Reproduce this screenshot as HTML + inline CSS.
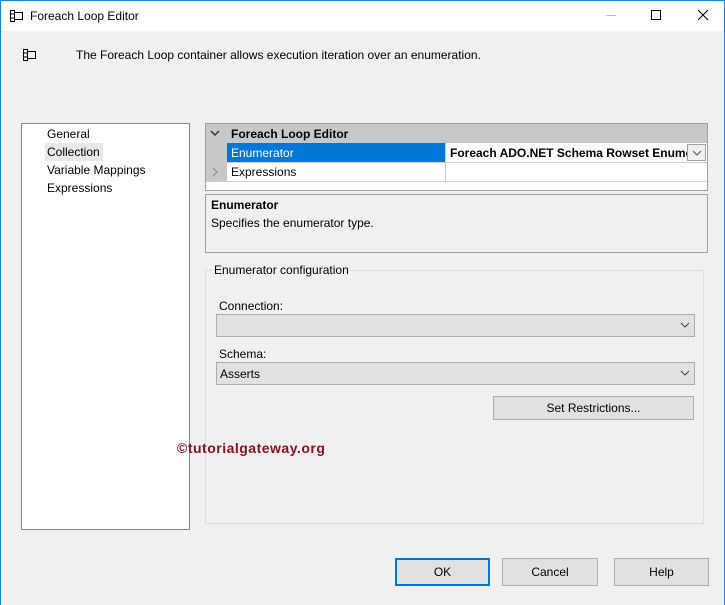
<!DOCTYPE html>
<html><head><style>
*{margin:0;padding:0;box-sizing:border-box}
body{width:725px;height:605px;overflow:hidden;background:#f0f0f0;font-family:"Liberation Sans",sans-serif;font-size:12px;color:#000;position:relative}
.a{position:absolute}
.t{position:absolute;white-space:nowrap;line-height:14px}
</style></head><body>
<div class="a" style="left:0;top:0;width:725px;height:31px;background:#fff"></div>
<div class="a" style="left:0;top:0;width:725px;height:1px;background:#1883d7"></div>
<div class="a" style="left:0;top:0;width:1px;height:605px;background:#1883d7"></div>
<div class="a" style="left:724px;top:0;width:1px;height:605px;background:#1883d7"></div>
<svg class="a" style="left:9px;top:9px" width="16" height="14"><path d="M1.5 1.5h4v11h-4zM1.5 5h4M1.5 9h4M5.5 3.5h8v7h-8" fill="none" stroke="#000" stroke-width="1"/></svg>
<div class="t" style="left:30px;top:9px">Foreach Loop Editor</div>
<div class="a" style="left:606px;top:15px;width:10px;height:1px;background:#bbb"></div>
<div class="a" style="left:651px;top:10px;width:10px;height:10px;border:1px solid #000"></div>
<svg class="a" style="left:697px;top:9px" width="12" height="12"><path d="M1 1L11 11M11 1L1 11" stroke="#000" stroke-width="1"/></svg>
<svg class="a" style="left:22px;top:48px" width="16" height="14"><path d="M1.5 1.5h4v11h-4zM1.5 5h4M1.5 9h4M5.5 3.5h8v7h-8" fill="none" stroke="#000" stroke-width="1"/></svg>
<div class="t" style="left:76px;top:48px">The Foreach Loop container allows execution iteration over an enumeration.</div>

<div class="a" style="left:21px;top:123px;width:169px;height:407px;background:#fff;border:1px solid #828790"></div>
<div class="t" style="left:47px;top:127px">General</div>
<div class="a" style="left:45px;top:143px;width:58px;height:18px;background:#e8e8e8"></div>
<div class="t" style="left:47px;top:145px">Collection</div>
<div class="t" style="left:47px;top:163px">Variable Mappings</div>
<div class="t" style="left:47px;top:181px">Expressions</div>

<div class="a" style="left:205px;top:123px;width:503px;height:68px;background:#fff;border:1px solid #a0a0a0"></div>
<div class="a" style="left:206px;top:124px;width:501px;height:19px;background:#c8c8c8"></div>
<div class="a" style="left:206px;top:143px;width:21px;height:38px;background:#c8c8c8"></div>
<svg class="a" style="left:210px;top:129px" width="10" height="8"><path d="M1 2l4 4 4-4" fill="none" stroke="#333" stroke-width="1.5"/></svg>
<div class="t" style="left:231px;top:127px;font-weight:bold">Foreach Loop Editor</div>
<div class="a" style="left:227px;top:143px;width:218px;height:19px;background:#0078d7"></div>
<div class="t" style="left:231px;top:146px;color:#fff">Enumerator</div>
<div class="a" style="left:445px;top:143px;width:1px;height:38px;background:#c8c8c8"></div>
<div class="t" style="left:450px;top:146px;font-weight:bold;width:237px;overflow:hidden">Foreach ADO.NET Schema Rowset Enumerator</div>
<div class="a" style="left:687px;top:144px;width:19px;height:17px;background:#f0f0f0;border:1px solid #a0a0a0"></div>
<svg class="a" style="left:692px;top:150px" width="10" height="6"><path d="M1 1l4 4 4-4" fill="none" stroke="#555"/></svg>
<div class="a" style="left:227px;top:162px;width:480px;height:1px;background:#d0d0d0"></div>
<svg class="a" style="left:212px;top:167px" width="6" height="10"><path d="M1 1l4 4-4 4" fill="none" stroke="#999" stroke-width="1.5"/></svg>
<div class="t" style="left:231px;top:165px">Expressions</div>
<div class="a" style="left:206px;top:181px;width:501px;height:1px;background:#d0d0d0"></div>

<div class="a" style="left:205px;top:194px;width:503px;height:59px;border:1px solid #a0a0a0"></div>
<div class="t" style="left:211px;top:198px;font-weight:bold">Enumerator</div>
<div class="t" style="left:211px;top:216px">Specifies the enumerator type.</div>

<div class="a" style="left:205px;top:270px;width:499px;height:254px;border:1px solid #dcdcdc"></div>
<div class="t" style="left:212px;top:263px;background:#f0f0f0;padding:0 2px">Enumerator configuration</div>
<div class="t" style="left:219px;top:299px">Connection:</div>
<div class="a" style="left:216px;top:314px;width:479px;height:23px;background:#e1e1e1;border:1px solid #adadad"></div>
<svg class="a" style="left:680px;top:322px" width="10" height="6"><path d="M1 1l4 4 4-4" fill="none" stroke="#444"/></svg>
<div class="t" style="left:219px;top:347px">Schema:</div>
<div class="a" style="left:216px;top:362px;width:479px;height:23px;background:#e1e1e1;border:1px solid #adadad"></div>
<div class="t" style="left:220px;top:367px">Asserts</div>
<svg class="a" style="left:680px;top:370px" width="10" height="6"><path d="M1 1l4 4 4-4" fill="none" stroke="#444"/></svg>
<div class="a" style="left:493px;top:396px;width:201px;height:24px;background:#e1e1e1;border:1px solid #adadad"></div>
<div class="t" style="left:493px;top:401px;width:201px;text-align:center">Set Restrictions...</div>

<div class="t" style="left:177px;top:441px;font-weight:bold;font-size:14px;letter-spacing:0.5px;color:#8b1020">©tutorialgateway.org</div>

<div class="a" style="left:395px;top:558px;width:95px;height:28px;background:#e1e1e1;border:2px solid #0078d7"></div>
<div class="t" style="left:395px;top:565px;width:95px;text-align:center">OK</div>
<div class="a" style="left:502px;top:558px;width:96px;height:28px;background:#e1e1e1;border:1px solid #adadad"></div>
<div class="t" style="left:502px;top:565px;width:96px;text-align:center">Cancel</div>
<div class="a" style="left:614px;top:558px;width:95px;height:28px;background:#e1e1e1;border:1px solid #adadad"></div>
<div class="t" style="left:614px;top:565px;width:95px;text-align:center">Help</div>
</body></html>
